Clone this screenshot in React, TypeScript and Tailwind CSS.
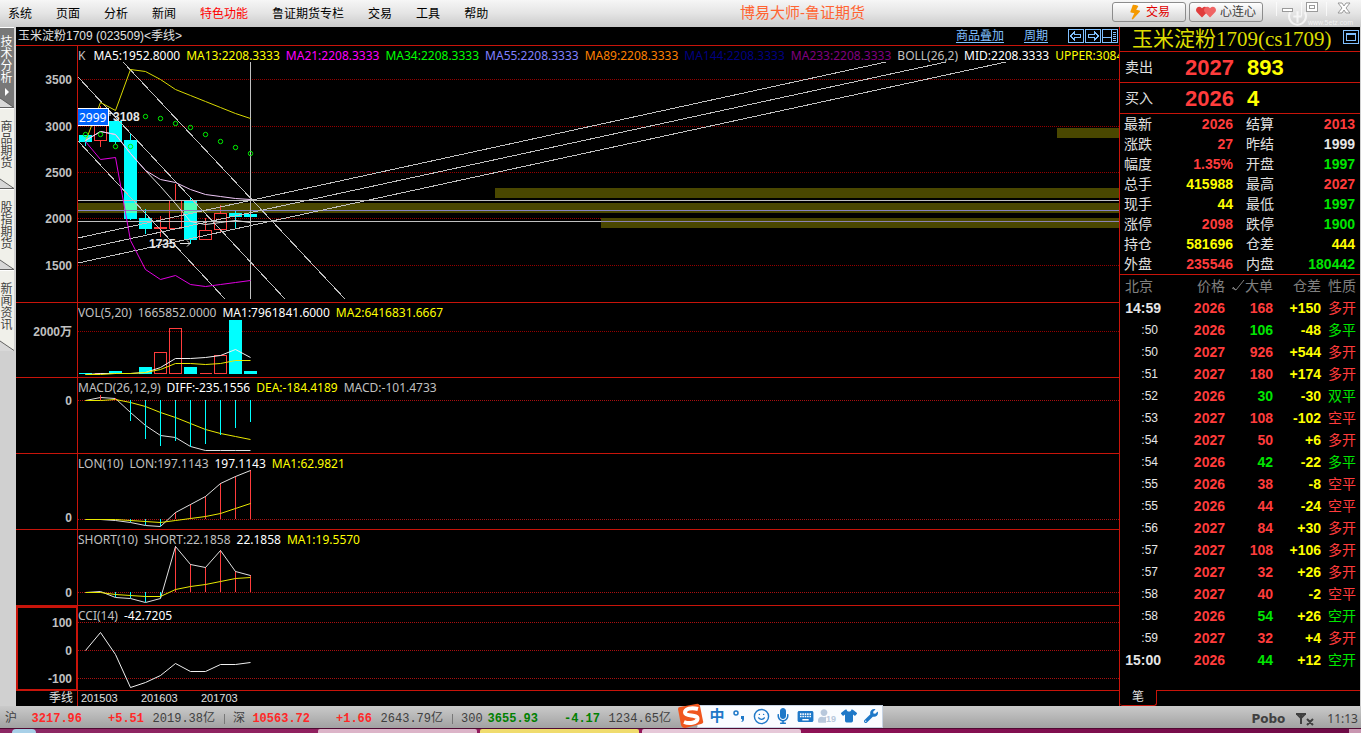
import type { ReactNode } from 'react'
import clsx from 'clsx'
import { Smile } from 'lucide-react'
import { FaBolt, FaHeart, FaMicrophone, FaUser, FaWrench } from 'react-icons/fa'
import { FaShirt } from 'react-icons/fa6'
import { MdKeyboard } from 'react-icons/md'

const menuItems = ['系统', '页面', '分析', '新闻', '特色功能', '鲁证期货专栏', '交易', '工具', '帮助']

const sideTabs = ['技术分析', '商品期货', '股指期货', '新闻资讯']

const tone = {
  red: 'text-[#ff3c3c]',
  green: 'text-[#00e600]',
  yellow: 'text-[#ffff00]',
  white: 'text-[#e6e6e6]',
}
type Tone = keyof typeof tone

const quotes: [string, string, Tone, string, string, Tone][] = [
  ['最新', '2026', 'red', '结算', '2013', 'red'],
  ['涨跌', '27', 'red', '昨结', '1999', 'white'],
  ['幅度', '1.35%', 'red', '开盘', '1997', 'green'],
  ['总手', '415988', 'yellow', '最高', '2027', 'red'],
  ['现手', '44', 'yellow', '最低', '1997', 'green'],
  ['涨停', '2098', 'red', '跌停', '1900', 'green'],
  ['持仓', '581696', 'yellow', '仓差', '444', 'yellow'],
  ['外盘', '235546', 'red', '内盘', '180442', 'green'],
]

const ticks: [string, string, string, Tone, string, string][] = [
  ['14:59', '2026', '168', 'red', '+150', '多开'],
  [':50', '2026', '106', 'green', '-48', '多平'],
  [':50', '2027', '926', 'red', '+544', '多开'],
  [':51', '2027', '180', 'red', '+174', '多开'],
  [':52', '2026', '30', 'green', '-30', '双平'],
  [':53', '2027', '108', 'red', '-102', '空平'],
  [':54', '2027', '50', 'red', '+6', '多开'],
  [':54', '2026', '42', 'green', '-22', '多平'],
  [':55', '2026', '38', 'red', '-8', '空平'],
  [':55', '2026', '44', 'red', '-24', '空平'],
  [':56', '2027', '84', 'red', '+30', '多开'],
  [':57', '2027', '108', 'red', '+106', '多开'],
  [':57', '2027', '32', 'red', '+26', '多开'],
  [':58', '2027', '40', 'red', '-2', '空平'],
  [':58', '2026', '54', 'green', '+26', '空开'],
  [':59', '2027', '32', 'red', '+4', '多开'],
  ['15:00', '2026', '44', 'green', '+12', '空开'],
]

const indices = [
  { name: '沪', value: '3217.96', change: '+5.51', amount: '2019.38亿', up: true },
  { name: '深', value: '10563.72', change: '+1.66', amount: '2643.79亿', up: true },
  { name: '300', value: '3655.93', change: '-4.17', amount: '1234.65亿', up: false },
]

// open/close box plus wick, one per quarter
const candles = [
  { up: false, top: 89, bottom: 96, high: 89, low: 100 },
  { up: true, top: 73, bottom: 94, high: 60, low: 101 },
  { up: false, top: 75, bottom: 96, high: 75, low: 98 },
  { up: false, top: 94, bottom: 173, high: 87, low: 174 },
  { up: false, top: 172, bottom: 183, high: 163, low: 188 },
  { up: true, top: 181, bottom: 182, high: 170, low: 191 },
  { up: true, top: 154, bottom: 182, high: 138, low: 182 },
  { up: false, top: 154, bottom: 194, high: 151, low: 198 },
  { up: true, top: 184, bottom: 193, high: 172, low: 193 },
  { up: true, top: 167, bottom: 183, high: 159, low: 187 },
  { up: false, top: 167, bottom: 171, high: 164, low: 183 },
  { up: false, top: 168, bottom: 171, high: 167, low: 171 },
]

const volumes = [
  { up: false, top: 70 },
  { up: true, top: 70 },
  { up: false, top: 68 },
  { up: false, top: 71 },
  { up: false, top: 64 },
  { up: true, top: 49 },
  { up: true, top: 25 },
  { up: false, top: 64 },
  { up: true, top: 70 },
  { up: true, top: 52 },
  { up: false, top: 17 },
  { up: false, top: 68 },
]

const upper = [95, 56, 64, 23, 25, 33, 43, 49, 55, 61, 67, 72]
const lower = [95, 113, 111, 194, 223, 233, 229, 238, 240, 238, 236, 234]
const mid = [94, 85, 88, 107, 124, 133, 136, 143, 148, 150, 152, 153]
const ma5 = [94, 85, 88, 107, 124, 140, 157, 175, 178, 176, 174, 176]
const sar = [88, 88, 100, 100, 70, 72, 77, 81, 88, 95, 101, 107]

const barX = (i: number) => 69 + i * 15

function Line({ data, color }: { data: number[]; color: string }) {
  const points = data.map((y, i) => `${barX(i) + 0.5},${y + 0.5}`).join(' ')
  return <polyline points={points} fill="none" stroke={color} strokeWidth="1" />
}

function Sticks({ zero, data, from = 0 }: { zero: number; data: number[]; from?: number }) {
  return (
    <g shapeRendering="crispEdges">
      {data.map((y, i) => (
        <line
          key={i}
          x1={barX(i + from) + 0.5}
          x2={barX(i + from) + 0.5}
          y1={zero}
          y2={y}
          stroke={y > zero ? '#00ffff' : '#ff3c3c'}
        />
      ))}
    </g>
  )
}

function Grid({ marks, color = '#a81010' }: { marks: [number, string, number?][]; color?: string }) {
  return (
    <>
      {marks.map(([y, label, textY]) => (
        <g key={label}>
          <line x1="62" x2="100%" y1={y + 0.5} y2={y + 0.5} stroke={color} strokeDasharray="1 1" shapeRendering="crispEdges" />
          <text x="56" y={(textY ?? y) + 5} textAnchor="end" fill="#c0c0c0" className="text-[12px] font-bold">
            {label}
          </text>
        </g>
      ))}
    </>
  )
}

type LegendItem = [string, string]

function Panel({ legend, height, children }: { legend: LegendItem[]; height: string; children: ReactNode }) {
  return (
    <section className={clsx('relative overflow-hidden border-b border-[#c8140a]', height)}>
      <svg className="absolute inset-0 h-full w-full" aria-hidden="true">
        {children}
        <line x1="61.5" x2="61.5" y1="0" y2="100%" stroke="#c8140a" shapeRendering="crispEdges" />
      </svg>
      <div className="relative ml-[62px] flex gap-[6px] overflow-hidden whitespace-nowrap font-['Noto_Sans'] text-[12px] leading-[20px]">
        {legend.map(([text, color]) => (
          <span key={text} className={color}>
            {text}
          </span>
        ))}
      </div>
    </section>
  )
}

function PriceChart() {
  return (
    <Panel
      height="min-h-[257px] flex-1"
      legend={[
        ['K', 'text-[#c0c0c0] pr-[2px]'],
        ['MA5:1952.8000', 'text-white'],
        ['MA13:2208.3333', 'text-[#ffff00]'],
        ['MA21:2208.3333', 'text-[#ff00ff]'],
        ['MA34:2208.3333', 'text-[#00ff00]'],
        ['MA55:2208.3333', 'text-[#8080ff]'],
        ['MA89:2208.3333', 'text-[#ff8000]'],
        ['MA144:2208.3333', 'text-[#000080]'],
        ['MA233:2208.3333', 'text-[#800080]'],
        ['BOLL(26,2)', 'text-[#c0c0c0]'],
        ['MID:2208.3333', 'text-white'],
        ['UPPER:3084', 'text-[#ffff00]'],
      ]}
    >
      <Grid
        color="#960000"
        marks={[
          [33, '3500'],
          [80, '3000'],
          [126, '2500'],
          [172, '2000'],
          [219, '1500'],
        ]}
      />
      <g fill="#4a4700">
        <rect x="62" y="157" width="100%" height="10" />
        <rect x="479" y="142" width="100%" height="10" />
        <rect x="585" y="172" width="100%" height="10" />
        <rect x="1041" y="82" width="100%" height="10" />
      </g>
      <g shapeRendering="crispEdges">
        {candles.map((c, i) => {
          const x = barX(i)
          const color = c.up ? '#ff3c3c' : '#00ffff'
          return (
            <g key={i} stroke={color}>
              <line x1={x + 0.5} x2={x + 0.5} y1={c.high} y2={c.top} />
              <line x1={x + 0.5} x2={x + 0.5} y1={c.bottom} y2={c.low} />
              {c.up ? (
                <rect x={x - 5.5} y={c.top + 0.5} width="12" height={c.bottom - c.top} fill="none" />
              ) : (
                <rect x={x - 6} y={c.top} width="13" height={c.bottom - c.top} fill={color} stroke="none" />
              )}
            </g>
          )
        })}
        <rect x="108" y="157" width="13" height="10" fill="#50ffb8" />
        <rect x="168" y="157" width="13" height="10" fill="#50ffb8" />
        <g stroke="#c0c0c0">
          <line x1="62" x2="100%" y1="154.5" y2="154.5" />
          <line x1="62" x2="100%" y1="175.5" y2="175.5" />
          <line x1="62" x2="100%" y1="164.5" y2="164.5" stroke="#8484c4" />
          <line x1="585" x2="100%" y1="175.5" y2="175.5" stroke="#8c84b4" />
          <line x1="62" y1="192" x2="870" y2="16" />
          <line x1="62" y1="204" x2="930" y2="16" />
          <line x1="62" y1="217" x2="990" y2="16" />
          <line x1="107" y1="16" x2="329" y2="253" />
          <line x1="62" y1="31" x2="269" y2="253" />
          <line x1="62" y1="95" x2="209" y2="253" />
          <line x1="234.5" x2="234.5" y1="16" y2="253" />
        </g>
      </g>
      <Line data={upper} color="#d8d800" />
      <Line data={lower} color="#e000e0" />
      <Line data={ma5} color="#e0e0e0" />
      <Line data={mid} color="#f0c8f8" />
      {sar.map((y, i) => (
        <circle key={i} cx={barX(i) + 0.5} cy={y + 0.5} r="2.2" fill="none" stroke="#00f000" />
      ))}
      <path d="M92 67.5h4M94 65v5M164 197.5h10M171 194.5l3 3l-3 3" fill="none" stroke="#e0e0e0" />
      <g fill="#e6e6e6" className="text-[12px] font-bold">
        <text x="97" y="75">3108</text>
        <text x="133" y="202">1735</text>
      </g>
      <rect x="61.5" y="62.5" width="31" height="17" fill="#0064ff" stroke="#ffffff" />
      <text x="63" y="76" fill="#ffffff" className="font-['Noto_Sans'] text-[12px]">
        2999
      </text>
    </Panel>
  )
}

function VolumeChart() {
  return (
    <Panel
      height="h-[75px]"
      legend={[
        ['VOL(5,20)', 'text-[#c0c0c0]'],
        ['1665852.0000', 'text-[#c0c0c0]'],
        ['MA1:7961841.6000', 'text-white'],
        ['MA2:6416831.6667', 'text-[#ffff00]'],
      ]}
    >
      <Grid marks={[[28, '2000万']]} color="#960000" />
      <g shapeRendering="crispEdges">
        {volumes.map((v, i) =>
          v.up ? (
            <rect key={i} x={barX(i) - 5.5} y={v.top + 0.5} width="12" height={70 - v.top} fill="none" stroke="#ff3c3c" />
          ) : (
            <rect key={i} x={barX(i) - 6} y={v.top} width="13" height={71 - v.top} fill="#00ffff" />
          )
        )}
        <path d="M79 70.5h12M184 70.5h12" stroke="#ff3c3c" />
      </g>
      <Line data={[71, 70, 70, 70, 69, 64, 55, 55, 54, 52, 46, 54]} color="#f0f0f0" />
      <Line data={[71, 71, 70, 70, 69, 66, 60, 60, 61, 60, 57, 57]} color="#e8e800" />
    </Panel>
  )
}

function MacdChart() {
  return (
    <Panel
      height="h-[76px]"
      legend={[
        ['MACD(26,12,9)', 'text-[#c0c0c0]'],
        ['DIFF:-235.1556', 'text-white'],
        ['DEA:-184.4189', 'text-[#ffff00]'],
        ['MACD:-101.4733', 'text-[#c0c0c0]'],
      ]}
    >
      <Grid marks={[[22, '0']]} />
      <Line data={[22, 19, 20, 34, 47, 57, 59, 68, 72, 72, 72, 72]} color="#e0e0e0" />
      <Line data={[22, 22, 21, 24, 28, 34, 39, 45, 51, 55, 58, 61]} color="#e8e800" />
      <Sticks zero={22} from={1} data={[17, 20, 43, 61, 68, 63, 69, 66, 57, 50, 44]} />
    </Panel>
  )
}

function LonChart() {
  return (
    <Panel
      height="h-[76px]"
      legend={[
        ['LON(10)', 'text-[#c0c0c0]'],
        ['LON:197.1143', 'text-[#c0c0c0]'],
        ['197.1143', 'text-white'],
        ['MA1:62.9821', 'text-[#ffff00]'],
      ]}
    >
      <Grid marks={[[65, '0', 63]]} />
      <Sticks zero={65} from={3} data={[68, 71, 72, 58, 50, 42, 29, 22, 16]} />
      <Line data={[65, 65, 66, 68, 71, 72, 58, 50, 42, 29, 22, 16]} color="#e0e0e0" />
      <Line data={[65, 65, 65, 66, 67, 68, 66, 64, 62, 59, 54, 49]} color="#e8e800" />
    </Panel>
  )
}

function ShortChart() {
  return (
    <Panel
      height="h-[76px]"
      legend={[
        ['SHORT(10)', 'text-[#c0c0c0]'],
        ['SHORT:22.1858', 'text-[#c0c0c0]'],
        ['22.1858', 'text-white'],
        ['MA1:19.5570', 'text-[#ffff00]'],
      ]}
    >
      <Grid marks={[[62, '0']]} />
      <Sticks zero={62} from={2} data={[67, 68, 72, 68, 16, 34, 37, 20, 41, 45]} />
      <Line data={[62, 61, 67, 68, 72, 68, 16, 34, 37, 20, 41, 45]} color="#e0e0e0" />
      <Line data={[62, 62, 64, 65, 66, 66, 59, 56, 54, 51, 48, 47]} color="#e8e800" />
    </Panel>
  )
}

function CciChart() {
  return (
    <Panel
      height="h-[85px]"
      legend={[
        ['CCI(14)', 'text-[#c0c0c0]'],
        ['-42.7205', 'text-white'],
      ]}
    >
      <Grid
        marks={[
          [16, '100'],
          [44, '0'],
          [72, '-100'],
        ]}
      />
      <Line data={[44, 26, 48, 81, 76, 69, 57, 65, 65, 58, 58, 56]} color="#f0f0f0" />
      <rect x="1" y="1" width="60" height="83" fill="none" stroke="#c8140a" strokeWidth="2" shapeRendering="crispEdges" />
    </Panel>
  )
}

function TitleBar() {
  return (
    <header className="relative flex h-[27px] shrink-0 items-center bg-linear-to-b from-[#f6f6f6] via-[#e4e4e4] to-[#cacaca]">
      <nav className="flex gap-6 pl-2 text-[12px] text-black" aria-label="主菜单">
        {menuItems.map((item) => (
          <button key={item} type="button" className={clsx('leading-[24px]', item === '特色功能' && 'text-[#ff0000]')}>
            {item}
          </button>
        ))}
      </nav>
      <h1 className="absolute left-[740px] top-0 text-[15px] leading-[26px] text-[#ff6432]">博易大师-鲁证期货</h1>
      <div className="ml-auto flex items-start gap-[3px] self-stretch pr-[5px] pt-[2px]">
        <button
          type="button"
          className="flex h-5 w-[74px] items-center justify-center gap-1 rounded-[3px] border border-[#8c8c8c] bg-linear-to-b from-white to-[#d6d6d6] text-[12px] text-[#e00000]"
        >
          <FaBolt className="h-[15px] w-[14px] rotate-12 text-[#f59a00]" />
          交易
        </button>
        <button
          type="button"
          className="flex h-5 w-[74px] items-center justify-center gap-1 rounded-[3px] border border-[#8c8c8c] bg-linear-to-b from-white to-[#d6d6d6] text-[12px] text-[#404040]"
        >
          <span className="flex items-center text-[#e03c3c]">
            <FaHeart className="h-3 w-3" />
            <FaHeart className="-ml-1 h-3 w-3 text-[#f06464]" />
          </span>
          心连心
        </button>
        <div className="flex pl-[10px] text-[#9a9a9a]">
          <button type="button" aria-label="最小化" className="h-[14px] w-[25px] border-l border-white/70">
            <svg width="24" height="14" fill="none" stroke="currentColor">
              <rect x="5.5" y="6.5" width="10" height="3" fill="#fff" />
            </svg>
          </button>
          <button type="button" aria-label="还原" className="h-[14px] w-[25px] border-l border-white/70">
            <svg width="24" height="14" fill="none" stroke="currentColor">
              <rect x="4.5" y="0.5" width="11" height="9" fill="#fff" />
              <rect x="7.5" y="3.5" width="5" height="3" />
            </svg>
          </button>
          <button type="button" aria-label="关闭" className="h-[14px] w-[30px] border-l border-white/70">
            <svg width="29" height="14" fill="none" stroke="currentColor">
              <path d="M11 1h4l2 3l2-3h4l-4 5l4 5h-4l-2-3l-2 3h-4l4-5z" fill="#fff" />
            </svg>
          </button>
        </div>
      </div>
      <div className="absolute right-2 top-2 flex items-end text-white/70" aria-hidden="true">
        <svg width="21" height="19" viewBox="0 0 20 18" fill="none" stroke="currentColor" strokeWidth="2">
          <path d="M3 4a8 8 0 1 0 14 0M10 3v11M6 8h8" />
        </svg>
        <span className="text-[7px] leading-[8px]">www.5etz.com</span>
      </div>
    </header>
  )
}

function SideTabs() {
  return (
    <aside className="w-4 shrink-0 bg-[#d0d0d0]">
      {sideTabs.map((tab, i) => (
        <button
          key={tab}
          type="button"
          className={clsx(
            'relative block h-[81px] w-[14px] overflow-hidden border-t border-white text-[12px] leading-3',
            i === 0 ? 'bg-[#787878] pt-2 text-white' : 'bg-[#f0f0ea] pt-3 text-[#404040]'
          )}
        >
          <span className="block h-full w-[13px] break-all">{tab}</span>
          {i === 0 && (
            <svg className="absolute left-[4px] top-[60px]" width="6" height="8" aria-hidden="true">
              <path d="M1 0l4 4l-4 4z" fill="#fff" />
            </svg>
          )}
          <svg className="absolute bottom-0 left-0" width="14" height="11" aria-hidden="true">
            <path d="M0 1L14 11H0z" fill="#d8d8d8" />
            <path d="M0 1L14 10.5" stroke="#606060" fill="none" />
            {i < 3 && <path d="M0 10.5H14" stroke="#606060" />}
          </svg>
        </button>
      ))}
    </aside>
  )
}

function ChartArea() {
  return (
    <main className="flex min-w-0 flex-1 flex-col bg-black">
      <div className="flex h-[19px] shrink-0 items-center border-b border-[#c8140a] pl-[2px] text-[12px] text-[#e0e0e0]">
        <h2 className="whitespace-pre leading-[18px]">玉米淀粉1709 (023509)&lt;季线&gt;</h2>
        <div className="ml-auto flex items-center text-[#80c0ff]">
          <a href="#overlay" className="mr-5 leading-[18px] underline underline-offset-2">
            商品叠加
          </a>
          <a href="#period" className="mr-5 leading-[18px] underline underline-offset-2">
            周期
          </a>
          <button type="button" aria-label="后退">
            <svg width="17" height="15" fill="none" stroke="currentColor" shapeRendering="crispEdges">
              <rect x="0.5" y="0.5" width="15" height="13" />
              <path d="M2.5 7l4-4v2.500h6v3h-6v2.500z" />
            </svg>
          </button>
          <button type="button" aria-label="前进">
            <svg width="17" height="15" fill="none" stroke="currentColor" shapeRendering="crispEdges">
              <rect x="0.5" y="0.5" width="15" height="13" />
              <path d="M13.500 7l-4-4v2.500h-6v3h6v2.500z" />
            </svg>
          </button>
          <button type="button" aria-label="侧栏" className="pr-[1px]">
            <svg width="16" height="15" fill="none" stroke="currentColor" shapeRendering="crispEdges">
              <path d="M0.500 0.500h15v13H0.500zM9.500 0v14M0 8.500h9M11 3.500h3M11 5.500h3M11 7.500h3M11 9.500h3M11 11.500h3" />
            </svg>
          </button>
        </div>
      </div>
      <PriceChart />
      <VolumeChart />
      <MacdChart />
      <LonChart />
      <ShortChart />
      <CciChart />
      <div className="flex h-[15px] shrink-0 text-[12px] leading-[15px] text-[#e0e0e0]">
        <span className="w-[62px] border-r border-[#c8140a] pr-1 text-right">季线</span>
        <span className="w-[60px] pl-[3px] text-[11px]">201503</span>
        <span className="w-[60px] pl-[3px] text-[11px]">201603</span>
        <span className="w-[60px] pl-[3px] text-[11px]">201703</span>
      </div>
    </main>
  )
}

function BigPrice({ label, price, size }: { label: string; price: string; size: string }) {
  return (
    <div className="flex h-[31px] items-center border-b border-[#c8140a] pl-[5px]">
      <span className="w-[60px] text-[14px] text-[#e0e0e0]">{label}</span>
      <span className="w-[49px] text-[22px] font-bold text-[#ff3c3c]">{price}</span>
      <span className="pl-[13px] text-[22px] font-bold text-[#ffff00]">{size}</span>
    </div>
  )
}

function QuotePanel() {
  return (
    <aside className="mr-px flex w-[241px] shrink-0 flex-col border-l border-[#c8140a] bg-black">
      <div className="flex h-[25px] items-center border-b border-[#c8140a] pl-3 pr-px">
        <h2 className="whitespace-nowrap font-['Liberation_Serif','Noto_Sans_CJK_SC',serif] text-[21px] leading-[24px] text-[#dcdc00]">
          玉米淀粉1709(cs1709)
        </h2>
        <button type="button" aria-label="最大化" className="-mt-1 ml-auto text-[#80c0ff]">
          <svg width="16" height="15" fill="none" stroke="currentColor" shapeRendering="crispEdges">
            <rect x="0.5" y="0.5" width="15" height="13" />
            <rect x="3.500" y="4.500" width="9" height="6" />
            <path d="M3 3.500h10" />
          </svg>
        </button>
      </div>
      <BigPrice label="卖出" price="2027" size="893" />
      <BigPrice label="买入" price="2026" size="4" />
      <dl className="border-b border-[#c8140a] pl-1 pr-[5px] text-[14px] leading-5 text-[#e0e0e0]">
        {quotes.map(([l1, v1, t1, l2, v2, t2]) => (
          <div key={l1} className="flex h-5">
            <dt>{l1}</dt>
            <dd className={clsx('flex-1 text-right font-bold', tone[t1])}>{v1}</dd>
            <dt className="pl-[13px]">{l2}</dt>
            <dd className={clsx('w-[81px] text-right font-bold', tone[t2])}>{v2}</dd>
          </div>
        ))}
      </dl>
      <table className="w-full table-fixed text-right text-[14px]">
        <thead>
          <tr className="h-[22px] text-[#808080]">
            <th className="w-[41px] pl-[5px] text-left font-normal">北京</th>
            <th className="w-[64px] font-normal">价格</th>
            <th className="w-[48px] whitespace-nowrap font-normal">
              <span className="flex items-center justify-end">
                <svg width="13" height="14" fill="none" stroke="currentColor" aria-hidden="true">
                  <path d="M0 9l4 2L12 1M1 8l3 3" />
                </svg>
                大单
              </span>
            </th>
            <th className="w-[48px] font-normal">仓差</th>
            <th className="pr-1 font-normal">性质</th>
          </tr>
        </thead>
        <tbody className="font-bold">
          {ticks.map(([time, price, vol, volTone, delta, kind], i) => (
            <tr key={i} className="h-[22px]">
              <td className={clsx('text-[#e6e6e6]', time.startsWith(':') ? 'pr-[3px] text-[12px] font-normal' : '')}>{time}</td>
              <td className={tone.red}>{price}</td>
              <td className={tone[volTone]}>{vol}</td>
              <td className={tone.yellow}>{delta}</td>
              <td className={clsx('pr-1 font-normal', tone[volTone])}>{kind}</td>
            </tr>
          ))}
        </tbody>
      </table>
      <div className="mt-auto flex h-4">
        <button type="button" className="w-[37px] rounded-b-[3px] border-b border-r border-[#c8140a] text-[12px] leading-[15px] text-[#e0e0e0]">
          笔
        </button>
        <span className="flex-1 border-t border-[#c8140a]" />
      </div>
    </aside>
  )
}

function InputMethodBar() {
  return (
    <div className="absolute left-[677px] top-[-3px] flex items-center">
      <svg width="28" height="26" viewBox="0 0 28 26" className="z-10" aria-label="输入法">
        <path d="M3 4Q1 4 1 6L4 22Q5 25 8 25L24 21Q27 20 26 18L23 3Q22 0 19 1Z" fill="#f0561e" />
        <path d="M21 6C14 4 8 6 8 9.500C8 14 21 11 20.500 16C20 20 12 21 7 19" fill="none" stroke="#fff" strokeWidth="4" />
      </svg>
      <div className="-ml-2 flex h-[23px] items-center border border-[#c8d4e4] bg-[#fafcff] pl-2 text-[#1e78c8]">
        <span className="w-[22px] text-center text-[15px] font-bold leading-[20px]">中</span>
        <span className="flex w-[22px] justify-center">
          <svg width="14" height="14" fill="none" stroke="currentColor" strokeWidth="1.5" aria-hidden="true">
            <circle cx="4" cy="4" r="2" />
            <path d="M9 7h3v3q0 3-3 3q2-1 1-3H9z" fill="currentColor" stroke="none" />
          </svg>
        </span>
        <span className="flex w-[22px] justify-center"><Smile className="h-[17px] w-[17px]" /></span>
        <span className="flex w-[22px] justify-center"><FaMicrophone className="h-4 w-4" /></span>
        <span className="flex w-[22px] justify-center"><MdKeyboard className="h-[19px] w-[19px]" /></span>
        <span className="flex w-[22px] items-end justify-center text-[#b8c8dc]">
          <FaUser className="h-[14px] w-[12px]" />
          <span className="-ml-1 bg-[#fafcff] text-[9px] font-bold leading-[8px]">19</span>
        </span>
        <span className="flex w-[22px] justify-center"><FaShirt className="h-4 w-4" /></span>
        <span className="flex w-[22px] justify-center"><FaWrench className="h-[14px] w-[14px]" /></span>
      </div>
    </div>
  )
}

function StatusBar() {
  return (
    <footer className="relative flex h-[22px] shrink-0 items-center bg-linear-to-b from-[#cacaca] to-[#a2a2a2] pl-[5px] pt-[3px] text-[12px] text-[#404040]">
      {indices.map((item, i) => {
        const color = item.up ? 'text-[#ff2828]' : 'text-[#008000]'
        return (
          <div
            key={item.name}
            className="flex items-center whitespace-nowrap font-['Liberation_Mono','Noto_Sans_CJK_SC',monospace] leading-[22px]"
          >
            <span className="flex w-[77px] justify-between">
              <span>{item.name}</span>
              <b className={color}>{item.value}</b>
            </span>
            <b className={clsx('w-[62px] text-right', color)}>{item.change}</b>
            <span className="w-[71px] text-right">{item.amount}</span>
            {i < 2 && <span className="ml-[9px] mr-2 h-[10px] w-px bg-[#787878]" />}
          </div>
        )
      })}
      <InputMethodBar />
      <div className="ml-auto flex items-center pr-[3px]">
        <b className="font-['DejaVu_Sans'] text-[12px]">Pobo</b>
        <svg className="ml-[10px] mr-3" width="20" height="14" fill="none" stroke="currentColor" strokeWidth="2" aria-hidden="true">
          <path d="M1 2h10M2 2l4 4l4-4M6 2v10M12 7l6 6M18 7l-6 6" />
        </svg>
        <time className="font-['Noto_Sans'] text-[12px]">11:13</time>
      </div>
    </footer>
  )
}

function TaskBar() {
  return (
    <div className="flex h-[5px] shrink-0 items-end gap-[3px] overflow-hidden border-t border-[#500a32] bg-linear-to-r from-[#8c2864] via-[#96145a] to-[#6e0a46]">
      <span className="ml-3 h-1 w-6 rounded-t-full bg-[#a8d0e8]" />
      <span className="ml-[279px] h-1 w-[159px] rounded-t-xs bg-[#dcb4c8]" />
      <span className="h-1 w-[159px] rounded-t-xs bg-[#f0dc6e]" />
      <span className="h-1 w-[159px] rounded-t-xs bg-[#e6c8d8]" />
      <span className="ml-auto h-1 w-3 bg-[#c896b0]" />
    </div>
  )
}

export default function App() {
  return (
    <div className="flex min-h-screen flex-col overflow-hidden bg-[#d0d0d0] font-['Liberation_Sans','Noto_Sans_CJK_SC',sans-serif]">
      <TitleBar />
      <div className="flex flex-1">
        <SideTabs />
        <ChartArea />
        <QuotePanel />
      </div>
      <StatusBar />
      <TaskBar />
    </div>
  )
}
